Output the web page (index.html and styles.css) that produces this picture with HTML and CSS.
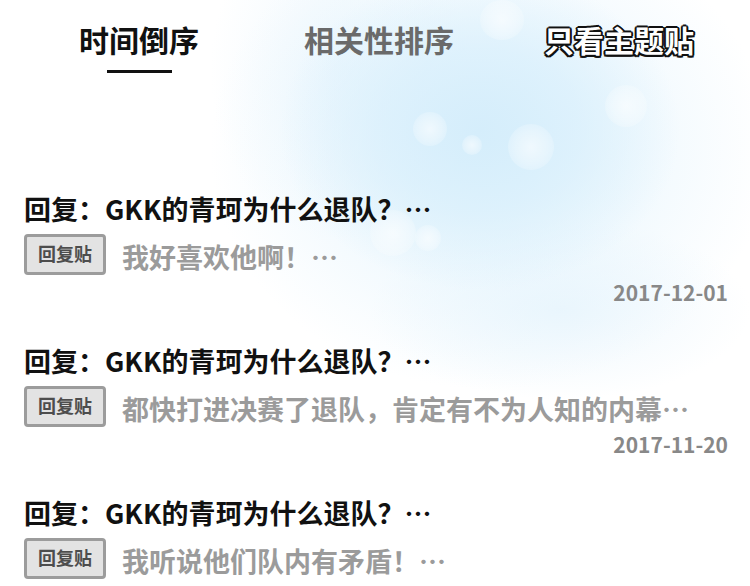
FILE: index.html
```html
<!DOCTYPE html>
<html lang="zh-CN">
<head>
<meta charset="utf-8">
<title>回复列表</title>
<link rel="stylesheet" href="styles.css">
</head>
<body>
<div class="page">
  <div class="bokeh b1"></div>
  <div class="bokeh b2"></div>
  <div class="bokeh b3"></div>
  <div class="bokeh b4"></div>
  <div class="bokeh b5"></div>
  <div class="bokeh b6"></div>
  <div class="bokeh b7"></div>
  <nav class="tabs">
    <div class="tab active"><span class="label">时间倒序</span><span class="bar"></span></div>
    <div class="tab muted"><span class="label">相关性排序</span></div>
    <div class="tab outline"><span class="label">只看主题贴</span></div>
  </nav>
  <ul class="posts">
    <li class="post">
      <h2 class="title">回复：GKK的青珂为什么退队？…</h2>
      <div class="row"><span class="badge">回复贴</span><span class="body">我好喜欢他啊！…</span></div>
      <div class="date">2017-12-01</div>
    </li>
    <li class="post">
      <h2 class="title">回复：GKK的青珂为什么退队？…</h2>
      <div class="row"><span class="badge">回复贴</span><span class="body">都快打进决赛了退队，肯定有不为人知的内幕…</span></div>
      <div class="date">2017-11-20</div>
    </li>
    <li class="post">
      <h2 class="title">回复：GKK的青珂为什么退队？…</h2>
      <div class="row"><span class="badge">回复贴</span><span class="body">我听说他们队内有矛盾！…</span></div>
      <div class="date">2017-11-20</div>
    </li>
  </ul>
</div>
</body>
</html>
```
FILE: styles.css
```css
html, body {
  margin: 0;
  padding: 0;
}
body {
  font-family: "Noto Sans CJK SC", "Noto Sans", sans-serif;
  background: #fff;
}
.page {
  position: relative;
  width: 750px;
  height: 586px;
  overflow: hidden;
  background:
    radial-gradient(ellipse 200px 160px at 480px 130px, rgba(212, 237, 251, 0.95) 0%, rgba(216, 239, 252, 0.7) 50%, rgba(235, 247, 253, 0) 100%),
    radial-gradient(ellipse 280px 240px at 490px 150px, rgba(220, 241, 252, 0.85) 0%, rgba(228, 244, 253, 0.45) 60%, rgba(255, 255, 255, 0) 100%),
    radial-gradient(ellipse 190px 90px at 560px 310px, rgba(228, 243, 252, 0.7) 0%, rgba(255, 255, 255, 0) 100%),
    radial-gradient(ellipse 130px 170px at 340px 70px, rgba(228, 243, 252, 0.6) 0%, rgba(255, 255, 255, 0) 100%),
    #ffffff;
}
.bokeh {
  position: absolute;
  border-radius: 50%;
  background: radial-gradient(circle, rgba(255,255,255,0.6) 0%, rgba(255,255,255,0.35) 50%, rgba(255,255,255,0) 100%);
}
.b1 { left: 413px; top: 112px; width: 34px; height: 34px; }
.b2 { left: 462px; top: 135px; width: 20px; height: 20px; }
.b3 { left: 508px; top: 124px; width: 46px; height: 46px; }
.b4 { left: 605px; top: 85px; width: 42px; height: 42px; }
.b5 { left: 370px; top: 210px; width: 46px; height: 46px; }
.b6 { left: 480px; top: 0px; width: 44px; height: 40px; }
.b7 { left: 415px; top: 225px; width: 26px; height: 26px; }

.tabs {
  position: relative;
  display: grid;
  grid-template-columns: repeat(3, 240px);
  padding: 19px 0 0 19px;
  height: 100px;
  box-sizing: border-box;
}
.tab {
  display: flex;
  flex-direction: column;
  align-items: center;
}
.label {
  font-size: 30px;
  line-height: 40px;
  font-weight: 700;
  white-space: nowrap;
}
.active .label { color: #111; }
.muted .label { color: #6a6a6a; }
.outline .label {
  color: #fff;
  text-shadow:
    2px 0 0 #111, -2px 0 0 #111, 0 2px 0 #111, 0 -2px 0 #111,
    1.5px 1.5px 0 #111, -1.5px 1.5px 0 #111, 1.5px -1.5px 0 #111, -1.5px -1.5px 0 #111;
}
.bar {
  display: block;
  width: 65px;
  height: 3px;
  margin-top: 11px;
  background: #111;
}

.posts {
  position: relative;
  list-style: none;
  margin: 0;
  padding: 91px 22px 0 24px;
}
.post {
  margin-bottom: 38px;
}
.title {
  margin: 0;
  font-size: 27px;
  line-height: 36px;
  font-weight: 700;
  color: #111;
  white-space: nowrap;
}
.row {
  display: flex;
  align-items: center;
  gap: 16px;
  margin-top: 6px;
  height: 42px;
}
.badge {
  box-sizing: border-box;
  width: 82px;
  height: 41px;
  border: 3px solid #9c9c9c;
  border-radius: 4px;
  background: #e3e3e3;
  color: #4d4d4d;
  font-size: 18px;
  font-weight: 700;
  display: flex;
  align-items: center;
  justify-content: center;
  padding-bottom: 3px;
  flex: none;
}
.body {
  font-size: 27px;
  line-height: 36px;
  font-weight: 700;
  color: #9b9b9b;
  white-space: nowrap;
  padding-top: 6px;
}
.date {
  margin-top: 4px;
  text-align: right;
  font-size: 21px;
  line-height: 26px;
  font-weight: 700;
  color: #888;
}
```
